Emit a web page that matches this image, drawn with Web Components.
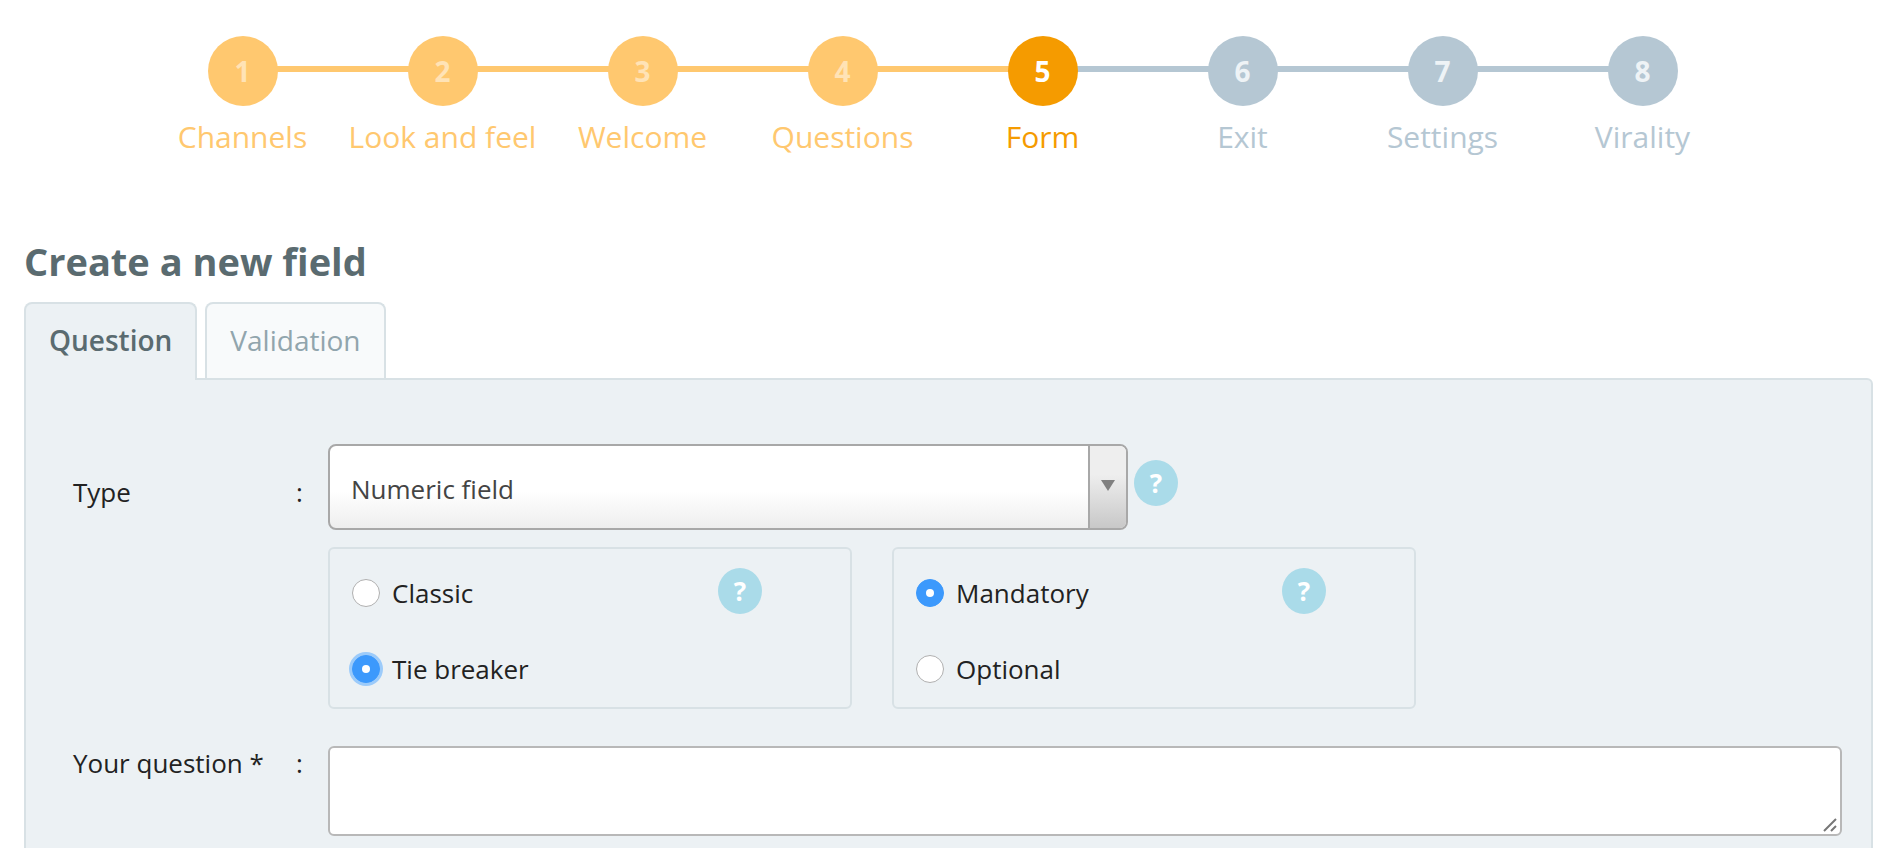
<!DOCTYPE html>
<html lang="en">
<head>
<meta charset="utf-8">
<title>Create a new field</title>
<style>
    html, body { margin: 0; height: 100%; overflow: hidden; background: #fff; }
    body { font-family: "Open Sans", sans-serif; color: #222; }
</style>
</head>
<body>
<wizard-steps current="5">
    <wizard-step>Channels</wizard-step>
    <wizard-step>Look and feel</wizard-step>
    <wizard-step>Welcome</wizard-step>
    <wizard-step>Questions</wizard-step>
    <wizard-step>Form</wizard-step>
    <wizard-step>Exit</wizard-step>
    <wizard-step>Settings</wizard-step>
    <wizard-step>Virality</wizard-step>
</wizard-steps>

<field-editor heading="Create a new field">
    <field-row label="Type">
        <div style="display:flex;gap:6px;align-items:flex-start">
            <select-box>Numeric field</select-box>
            <help-badge style="margin-top:16px"></help-badge>
        </div>
        <div style="display:flex;gap:40px;margin-top:17px">
            <option-group>
                <radio-option>Classic</radio-option>
                <radio-option checked focused>Tie breaker</radio-option>
            </option-group>
            <option-group>
                <radio-option checked>Mandatory</radio-option>
                <radio-option>Optional</radio-option>
            </option-group>
        </div>
    </field-row>
    <field-row label="Your question *" style="margin-top:37px">
        <question-input></question-input>
    </field-row>
</field-editor>

<script>
    function define(name, css, html, init) {
        customElements.define(name, class extends HTMLElement {
            constructor() {
                super();
                this.attachShadow({ mode: 'open' });
                this.shadowRoot.innerHTML = `<style>${css}</style>${html}`;
            }
            connectedCallback() {
                if (init) init(this);
            }
        });
    }

    define('wizard-steps', `
        :host { display: flex; padding: 36px 0 0 142.5px; }
    `, `<slot></slot>`, el => {
        const current = parseInt(el.getAttribute('current'));
        const steps = el.querySelectorAll('wizard-step');
        steps.forEach((step, i) => {
            const n = i + 1;
            step.setAttribute('number', n);
            step.setAttribute('state', n < current ? 'done' : n === current ? 'active' : 'todo');
            if (n === steps.length) step.setAttribute('last', '');
        });
    });

    customElements.define('wizard-step', class extends HTMLElement {
        static get observedAttributes() { return ['number']; }
        constructor() {
            super();
            this.attachShadow({ mode: 'open' });
            this.shadowRoot.innerHTML = `
                <style>
                    :host { display: block; width: 200px; position: relative; text-align: center; --tone: #b5c7d3; --digit: #eef3f6; --rail: #b5c7d3; }
                    :host([state="done"]) { --tone: #ffc86f; --digit: #ffe3b6; --rail: #ffc86f; }
                    :host([state="active"]) { --tone: #f59b00; --digit: #fff; --rail: #b5c7d3; }
                    .rail { position: absolute; left: 100px; top: 30px; width: 200px; height: 6px; background: var(--rail); }
                    :host([last]) .rail { display: none; }
                    .dot {
                        position: relative;
                        width: 70px; height: 70px; margin: 0 auto;
                        border-radius: 50%;
                        background: var(--tone); color: var(--digit);
                        font: 700 28px/70px "Open Sans", sans-serif;
                    }
                    .label { margin-top: 12px; font-size: 30px; line-height: 38px; color: var(--tone); white-space: nowrap; }
                </style>
                <div class="rail"></div>
                <div class="dot"></div>
                <div class="label"><slot></slot></div>
            `;
        }
        attributeChangedCallback() {
            this.shadowRoot.querySelector('.dot').textContent = this.getAttribute('number');
        }
    });

    define('field-editor', `
        :host { display: block; padding: 0 29px 0 24px; margin-top: 80px; }
        h2 { margin: 0; font-size: 38px; line-height: 50px; font-weight: 700; color: #5a6b70; }
        .tabs { display: flex; gap: 8px; margin-top: 16px; position: relative; z-index: 1; }
        .tab {
            box-sizing: border-box; height: 76px; padding: 0 23px;
            border: 2px solid #d8e1e5; border-bottom: 0; border-radius: 8px 8px 0 0;
            font-size: 28px; line-height: 72px; background: #f8fafb; color: #91a5ad;
        }
        .tab.on { background: #ecf1f4; color: #5a6b70; font-weight: 600; height: 78px; margin-bottom: -2px; }
        .panel { background: #ecf1f4; border: 2px solid #d8e1e5; border-radius: 0 6px 0 0; padding: 64px 29px 200px 47px; }
    `, `
        <h2></h2>
        <div class="tabs"><div class="tab on">Question</div><div class="tab">Validation</div></div>
        <div class="panel"><slot></slot></div>
    `, el => {
        el.shadowRoot.querySelector('h2').textContent = el.getAttribute('heading');
    });

    define('field-row', `
        :host { display: grid; grid-template-columns: 223px 32px 1fr; font-size: 26px; color: #222; }
        .name, .colon { line-height: 34px; padding-top: 31px; white-space: nowrap; }
        :host([label^="Your"]) .name, :host([label^="Your"]) .colon { padding-top: 0; }
    `, `<div class="name"></div><div class="colon">:</div><div><slot></slot></div>`, el => {
        el.shadowRoot.querySelector('.name').textContent = el.getAttribute('label');
    });

    define('select-box', `
        :host {
            box-sizing: border-box; display: flex; width: 800px; height: 86px;
            border: 2px solid #a8a8a8; border-radius: 8px; overflow: hidden;
            background: linear-gradient(#fff 0, #fff 55%, #eeeeee 100%);
            font-size: 26px; color: #444;
        }
        .value { flex: 1; padding-left: 21px; line-height: 86px; }
        .arrow {
            width: 36px; border-left: 2px solid #a8a8a8;
            background: linear-gradient(#eeeeee 0, #eeeeee 35%, #c8c8c8 100%);
            display: flex; align-items: center; justify-content: center;
        }
        .arrow svg { display: block; margin-bottom: 4px; }
    `, `
        <div class="value"><slot></slot></div>
        <div class="arrow"><svg width="14" height="11" viewBox="0 0 14 11"><path d="M0 0h14L7 11z" fill="#808080"/></svg></div>
    `);

    define('help-badge', `
        :host {
            display: block; flex: none; width: 44px; height: 46px; border-radius: 50%;
            background: #aadbe9; color: #fff; text-align: center;
            font: 700 26px/46px "Open Sans", sans-serif;
        }
    `, `?`);

    define('option-group', `
        :host {
            box-sizing: border-box; display: block; position: relative; width: 524px; height: 162px;
            border: 2px solid #d8e1e5; border-radius: 6px; padding: 6px 22px;
        }
        help-badge { position: absolute; left: 388px; top: 19px; }
    `, `<slot></slot><help-badge></help-badge>`);

    define('radio-option', `
        :host { display: flex; align-items: center; gap: 12px; height: 76px; font-size: 26px; color: #222; }
        .mark {
            box-sizing: border-box; flex: none; width: 28px; height: 28px; border-radius: 50%;
            background: #fff; border: 1px solid #b0b0b0;
            display: flex; align-items: center; justify-content: center;
        }
        :host([checked]) .mark { background: #3c99fc; border-color: #3c99fc; }
        :host([checked]) .mark::after { content: ""; width: 8px; height: 8px; border-radius: 50%; background: #fff; }
        :host([focused]) .mark { box-shadow: 0 0 0 3px #9ccbfa; }
    `, `<span class="mark"></span><span><slot></slot></span>`);

    define('question-input', `
        :host { display: block; position: relative; width: 1514px; }
        textarea {
            display: block; box-sizing: border-box; width: 100%; height: 90px; margin: 0; padding: 8px;
            border: 2px solid #b8b8b8; border-radius: 6px; background: #fff; outline: 0; resize: none;
            font: 26px "Open Sans", sans-serif;
        }
        svg { position: absolute; right: 5px; bottom: 4px; }
    `, `
        <textarea aria-label="Your question"></textarea>
        <svg width="14" height="14" viewBox="0 0 14 14"><path d="M1 13 13 1M8 13l5-5" stroke="#777" stroke-width="2" fill="none"/></svg>
    `);
</script>
</body>
</html>
